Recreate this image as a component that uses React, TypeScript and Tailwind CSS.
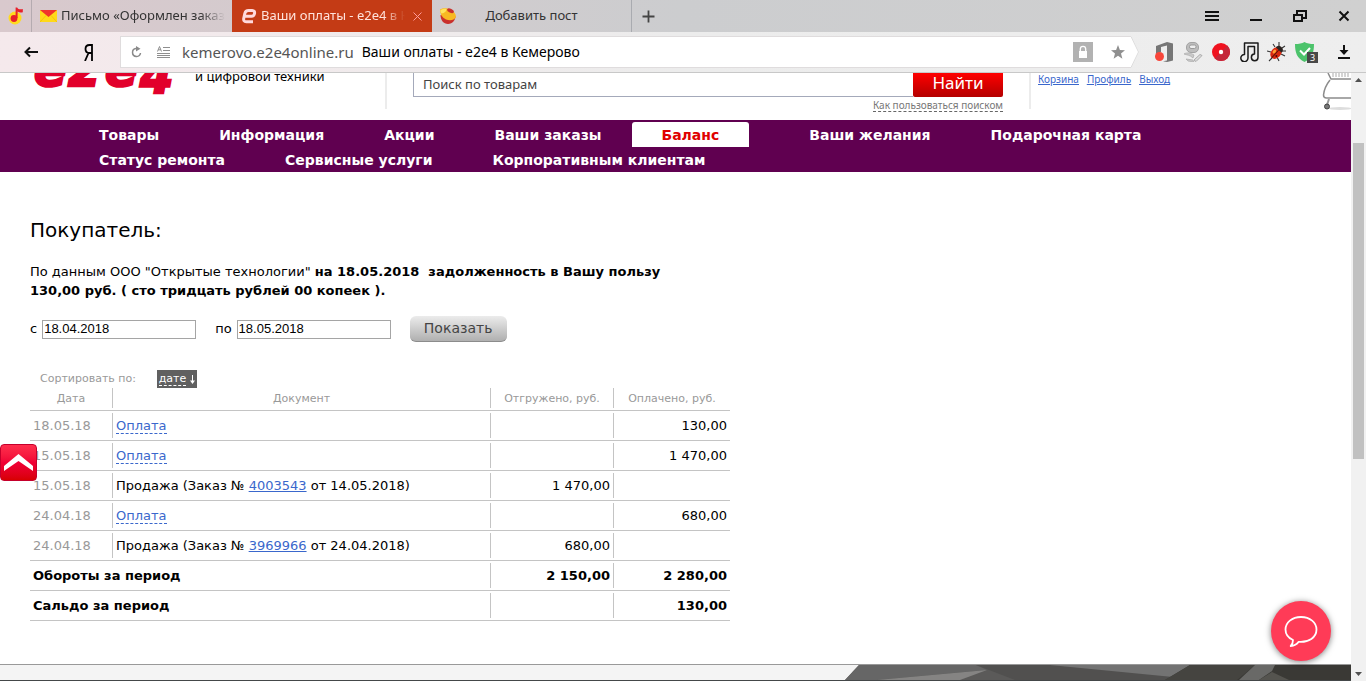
import type { ReactNode } from 'react';

const ui = 'font-["Noto_Sans","Open_Sans",sans-serif]';

const firstMenu = ['Товары', 'Информация', 'Акции', 'Ваши заказы', 'Баланс', 'Ваши желания', 'Подарочная карта'];
const secondMenu = ['Статус ремонта', 'Сервисные услуги', 'Корпоративным клиентам'];

type Row = { date: string; order?: string; from?: string; shipped?: string; paid?: string };

const rows: Row[] = [
  { date: '18.05.18', paid: '130,00' },
  { date: '15.05.18', paid: '1 470,00' },
  { date: '15.05.18', order: '4003543', from: '14.05.2018', shipped: '1 470,00' },
  { date: '24.04.18', paid: '680,00' },
  { date: '24.04.18', order: '3969966', from: '24.04.2018', shipped: '680,00' },
];

function TabStrip() {
  return (
    <div className={`${ui} flex h-8 shrink-0 bg-linear-to-r from-[#d9c9cd] via-[#cccdcf] to-[#d0d0d0] text-[13px] text-[#333]`}>
      <button aria-label="Музыка" className="flex w-8 shrink-0 items-center justify-center border-r border-[#b5abb0]">
        <svg width="16" height="18" viewBox="0 0 16 18">
          <circle cx="7" cy="11" r="6.5" fill="#ffdb1f" />
          <circle cx="6" cy="11.5" r="3.4" fill="#e8202a" />
          <path d="M7.600 11V0.500h1.600c.5 2 3.500 2 5.600 1.600v3.200c-2 .6-4 .3-5.200-.8V11z" fill="#e8202a" />
        </svg>
      </button>
      <button className="flex w-50 shrink-0 items-center gap-1 overflow-hidden pl-2">
        <svg width="17" height="12" viewBox="0 0 17 12" className="shrink-0">
          <rect width="17" height="12" fill="#ffd91a" />
          <path d="M0 0h17L8.500 7z" fill="#f0342c" />
          <path d="M0 12l6-6.500M17 12l-6-6.500" stroke="#eab600" strokeWidth=".6" />
        </svg>
        <span className="whitespace-nowrap mask-r-from-85%">Письмо «Оформлен заказ</span>
      </button>
      <div className="flex w-50 shrink-0 items-center bg-[#c43b15] pl-[9px] text-[#ffe3dc]">
        <svg width="16" height="16" viewBox="0 0 16 16" className="shrink-0">
          <path
            d="M4 8.200h6.500c1.700 0 2.600-.6 3-2.500.4-2-.3-3.200-2.300-3.200H7.500C5.300 2.500 4.300 3.400 3.800 5.500L2.800 10c-.5 2.500.2 3.700 2.500 3.700H12"
            fill="none"
            stroke="#ffd9dc"
            strokeWidth="3"
          />
        </svg>
        <button className="ml-1 w-36 overflow-hidden text-left whitespace-nowrap mask-r-from-85%">Ваши оплаты - e2e4 в Ке</button>
        <button aria-label="Закрыть вкладку" className="ml-2">
          <svg width="9" height="9" viewBox="0 0 9 9">
            <path d="M.5.5l8 8M8.500.5l-8 8" stroke="#ff9a9a" />
          </svg>
        </button>
      </div>
      <button className="flex w-50 shrink-0 items-center border-r border-[#a9abb0] pl-2">
        <svg width="16" height="16" viewBox="0 0 16 16">
          <path d="M.5 7c0 5 3 9 7.500 9s7.500-4 7.500-8z" fill="#c9302c" />
          <path d="M0 1.500C3-.5 7 0 10 1.500c4 1.500 6 4.500 6 7.500-2 3.500-6 4-10 2.500C2 9.500 0 6 0 1.500z" fill="#f8b922" />
          <path d="M.5 2C3 .5 5 .5 6.500 1c0 2.500-2 4-5 4.500C.6 4.500.3 3 .5 2z" fill="#ffe45c" />
          <ellipse cx="10.500" cy="2.800" rx="3.600" ry="2" transform="rotate(25 10.500 2.800)" fill="#c9302c" />
        </svg>
        <span className="grow pr-6 text-center">Добавить пост</span>
      </button>
      <button aria-label="Новая вкладка" className="px-2.5">
        <svg width="13" height="13" viewBox="0 0 13 13">
          <path d="M6.500.5v12M.5 6.500h12" stroke="#444" strokeWidth="1.800" />
        </svg>
      </button>
      <div className="ml-auto flex items-center gap-[30px] pr-[15px] text-[#111]">
        <button aria-label="Меню">
          <svg width="14" height="12" viewBox="0 0 14 12">
            <path d="M0 2h14M0 6h14M0 10h14" stroke="currentColor" strokeWidth="2" />
          </svg>
        </button>
        <button aria-label="Свернуть">
          <svg width="14" height="12" viewBox="0 0 14 12">
            <path d="M1 10h12" stroke="currentColor" strokeWidth="2" />
          </svg>
        </button>
        <button aria-label="Окно">
          <svg width="14" height="12" viewBox="0 0 14 12" fill="none" stroke="currentColor" strokeWidth="2">
            <path d="M1 5h8v6H1zM4 4.500V1h9v7h-3" />
          </svg>
        </button>
        <button aria-label="Закрыть">
          <svg width="14" height="12" viewBox="0 0 14 12">
            <path d="M2.500 1.500l9 9M11.500 1.500l-9 9" stroke="currentColor" strokeWidth="2" />
          </svg>
        </button>
      </div>
    </div>
  );
}

function AddressBar() {
  return (
    <div className={`${ui} flex h-[41px] shrink-0 items-center border-b border-[#c8c8c8] bg-linear-to-r from-[#f5e9ec] via-[#ececec] to-[#eeeeee]`}>
      <button aria-label="Назад" className="ml-6">
        <svg width="15" height="12" viewBox="0 0 15 12" fill="none" stroke="#111" strokeWidth="2">
          <path d="M14 6H1.500M6 1.500L1.500 6 6 10.500" />
        </svg>
      </button>
      <button className="ml-[45px] w-3" aria-label="Яндекс">
        <svg width="9" height="17" viewBox="0 0 9 17" fill="none" stroke="#000" strokeWidth="1.800">
          <path d="M8 17V1H5.500C2.800 1 1.500 2.600 1.500 5s1.300 4 4 4H8M4.500 9L1 17" />
        </svg>
      </button>
      <div className="ml-6 flex h-8 min-w-0 grow">
        <div className="flex min-w-0 grow items-center border border-r-0 border-[#dfdcdd] bg-white pl-2.5">
          <button aria-label="Обновить">
            <svg width="11" height="12" viewBox="0 0 11 12">
              <path d="M7 2.500H5A4 4 0 1 0 9.500 7" fill="none" stroke="#8a8a8a" strokeWidth="1.500" />
              <path d="M5 0l4.500 2.700L5 5.500z" fill="#8a8a8a" />
            </svg>
          </button>
          <svg width="13" height="12" viewBox="0 0 13 12" className="ml-[15px] shrink-0" fill="none" stroke="#8e8e8e">
            <path d="M6 1.500h7M6 4.500h7M0 7.500h13M0 9.500h13M0 11.500h13M.5 5.500L2.500.5l2 5M1.200 3.800h2.600" />
          </svg>
          <span className="ml-3 text-[15px] text-[#555]">kemerovo.e2e4online.ru</span>
          <span className="ml-2 truncate text-sm text-black">Ваши оплаты - e2e4 в Кемерово</span>
          <div className="ml-auto flex items-center gap-4.5 pr-1.5">
            <svg width="20" height="20" viewBox="0 0 20 20">
              <rect width="20" height="20" fill="#b2b2b2" />
              <rect x="6" y="9" width="8" height="7" fill="#fff" />
              <path d="M7.300 9V7a2.700 2.700 0 0 1 5.400 0v2" fill="none" stroke="#fff" strokeWidth="1.300" />
            </svg>
            <svg width="14" height="14" viewBox="0 0 14 14">
              <path d="M7 0l1.900 4.900 5.100.300-4 3.300 1.400 5.200L7 10.800l-4.400 2.900L4 8.500 0 5.200l5.100-.3z" fill="#8f8f8f" />
            </svg>
          </div>
        </div>
        <svg width="8" height="32" viewBox="0 0 8 32" className="shrink-0">
          <path d="M0 0l8 16-8 16z" fill="#fff" />
          <path d="M0 .5L7.500 16 0 31.500" fill="none" stroke="#dcdcdc" />
        </svg>
      </div>
      <div className="ml-4 flex items-center gap-2 pr-4">
        <svg width="20" height="20" viewBox="0 0 20 20">
          <path d="M1 4l11-4 6 1.500v17L12 20l-4-.7 4-.8V3.500L6 5v5L1 12z" fill="#767676" />
          <circle cx="4.500" cy="14.500" r="4.500" fill="#f8463a" />
        </svg>
        <svg width="20" height="20" viewBox="0 0 20 20">
          <rect x="3.500" y=".5" width="12" height="10" rx="4.500" fill="#bdbdbd" stroke="#a3a3a3" />
          <rect x="6.500" y="3" width="6.500" height="3.500" rx="1.500" fill="#eee" stroke="#999" />
          <path d="M1 12c3-2 7-1 10 1l-1 3c-3-3-6-3-9-4zM3 17l7 1 1 2-6-1z" fill="#c9c9c9" stroke="#aaa" strokeWidth=".7" />
          <path d="M11 18l6-5.500 2 1-6 6z" fill="#ddd" stroke="#aaa" />
        </svg>
        <svg width="20" height="20" viewBox="0 0 20 20">
          <circle cx="10" cy="10" r="9" fill="#f0121f" />
          <path d="M16.400 3.600A9 9 0 0 1 3.600 16.400z" fill="#c5263a" />
          <circle cx="10" cy="10" r="2.200" fill="#fff" />
        </svg>
        <svg width="20" height="20" viewBox="0 0 20 20" fill="none" stroke="#1b1b1b" strokeWidth="1.500" strokeLinejoin="round">
          <path d="M5.500 1H19v14.500a3.300 3.300 0 1 1-3.500-3.400V4.500H9V16a3.600 3.600 0 1 1-3.500-3.500z" />
        </svg>
        <svg width="20" height="20" viewBox="0 0 20 20">
          <path d="M8 5L6 2M12 4V0M15 6l3-2M15 9h4M14 12l4 2M10 15l2 4M5 16l-3 3M4 10L0 9" stroke="#333" strokeWidth="1.100" />
          <g transform="rotate(42 9 11)">
            <ellipse cx="9" cy="11" rx="5" ry="6.500" fill="#d9280f" />
            <path d="M5 7a4 4 0 0 1 8 0z" fill="#2c2320" />
            <path d="M9 7v10.500" stroke="#5a1208" />
            <ellipse cx="6.800" cy="11" rx="1.400" ry="2.200" fill="#ffa033" />
            <circle cx="11.300" cy="13" r="1" fill="#4a0f06" />
          </g>
        </svg>
        <span className="relative">
          <svg width="20" height="20" viewBox="0 0 20 20">
            <path d="M0 2c4 0 7-.6 9.500-2C12 1.400 15 2 19 2c0 9-2 14-9.500 18C2 16 0 11 0 2z" fill="#4cc36b" />
            <path d="M5 8.500l4 4 6-6.500" fill="none" stroke="#fff" strokeWidth="2" />
          </svg>
          <span className="absolute top-2.5 left-3 h-[11px] w-[11px] bg-[#484848] text-center text-[9px] leading-[11px] text-white">3</span>
        </span>
        <button aria-label="Загрузки" className="ml-[15px]">
          <svg width="12" height="14" viewBox="0 0 12 14">
            <path d="M6 0v8M0 13h12" stroke="#111" strokeWidth="2" />
            <path d="M1.500 5h9L6 10z" fill="#111" />
          </svg>
        </button>
      </div>
    </div>
  );
}

function ShopHeader() {
  return (
    <header className="flex h-[47px] shrink-0 items-start overflow-hidden">
      <svg width="145" height="24" viewBox="0 0 145 24" className="ml-[34px] shrink-0" role="img" aria-label="e2e4">
        <g
          fill="#e2002b"
          stroke="#e2002b"
          strokeWidth="2.500"
          fontFamily="DejaVu Sans"
          fontWeight="bold"
          fontStyle="italic"
          fontSize="48"
        >
          <text x="0" y="13">e</text>
          <text x="34" y="13">2</text>
          <text x="71" y="13">e</text>
          <text x="106" y="20">4</text>
        </g>
      </svg>
      <p className={`${ui} ml-4 w-[190px] shrink-0 text-[13px] leading-1.5 text-black`}>и цифровой техники</p>
      <div className="h-9 w-0.5 shrink-0 bg-[#ececec]" />
      <form className="ml-[26px] w-[590px] shrink-0">
        <div className="flex h-6">
          <input
            aria-label="Поиск по товарам"
            placeholder="Поиск по товарам"
            className={`${ui} min-w-0 grow border border-t-0 border-r-0 border-[#a4a9ba] pl-[9px] text-[13px] placeholder:text-[#444]`}
          />
          <button className={`${ui} w-[90px] rounded-b-xs bg-linear-to-b from-[#ff0000] to-[#b40000] pb-1 text-[17px] leading-5 text-white`}>Найти</button>
        </div>
        <a href="#search-help" className={`${ui} float-right mt-0.5 border-b border-dashed border-[#666] text-[10px] leading-3 text-[#777]`}>
          Как пользоваться поиском
        </a>
      </form>
      <div className="ml-[26px] h-9 w-0.5 shrink-0 bg-[#ececec]" />
      <nav className={`${ui} ml-[7px] flex gap-2 text-[10px] leading-3 text-[#3a67cc] underline`}>
        <a href="#cart">Корзина</a>
        <a href="#profile">Профиль</a>
        <a href="#exit">Выход</a>
      </nav>
      <svg width="29" height="38" viewBox="0 0 29 38" className="ml-auto shrink-0" fill="none">
        <path d="M6 0l3 6h20" stroke="#8a8a8a" strokeWidth="1.500" />
        <path d="M11 0v4M14 0v4M17 0v4M20 0v4M23 0v4M26 0v4" stroke="#aaa" />
        <path d="M8 7C4 12 2 17 1.500 22c0 2 1 3 3 3H29" stroke="#8c8c8c" strokeWidth="1.500" />
        <path d="M7 26l-2 6" stroke="#999" strokeWidth="2" />
        <ellipse cx="18" cy="35.500" rx="12" ry="1.500" fill="#ddd" />
        <circle cx="5" cy="33.500" r="2.500" fill="#777" stroke="#444" />
      </svg>
    </header>
  );
}

function Menu() {
  return (
    <nav className="shrink-0 bg-[#600050] pt-0.5 pl-[69px] text-sm leading-[27px] font-bold whitespace-nowrap text-white">
      <div className="flex h-[25px]">
        {firstMenu.map((item) => (
          <a
            key={item}
            href="#menu"
            className={item === 'Баланс' ? 'mr-[30px] rounded-t-[3px] bg-white px-[30px] text-[#e00000]' : 'px-[30px]'}
          >
            {item}
          </a>
        ))}
      </div>
      <div className="flex h-[25px]">
        {secondMenu.map((item) => (
          <a key={item} href="#menu" className="px-[30px]">
            {item}
          </a>
        ))}
      </div>
    </nav>
  );
}

function Cell({ children, align = 'text-right', line = true }: { children?: ReactNode; align?: string; line?: boolean }) {
  return (
    <div className={`h-[25px] px-[3px] leading-[25px] ${align} ${line ? 'border-l border-[#c4c4c4]' : ''}`}>{children}</div>
  );
}

const td = 'border-b border-[#c4c4c4] py-0.5';

function Ledger() {
  return (
    <table className="w-[700px] table-fixed border-separate border-spacing-0">
      <colgroup>
        <col className="w-[82px]" />
        <col className="w-[378px]" />
        <col className="w-[123px]" />
        <col className="w-[117px]" />
      </colgroup>
      <thead className="text-[11px] text-[#999]">
        <tr>
          {['Дата', 'Документ', 'Отгружено, руб.', 'Оплачено, руб.'].map((h, i) => (
            <th key={h} className="border-b border-[#c4c4c4] pb-0.5 font-normal">
              <div className={`h-5 leading-[22px] ${i ? 'border-l border-[#c4c4c4]' : ''}`}>{h}</div>
            </th>
          ))}
        </tr>
      </thead>
      <tbody>
        {rows.map((r, i) => (
          <tr key={i}>
            <td className={`${td} text-[#999]`}>
              <Cell align="text-left" line={false}>{r.date}</Cell>
            </td>
            <td className={td}>
              <Cell align="text-left">
                {r.order ? (
                  <>
                    Продажа (Заказ № <a href="#order" className="text-[#3a67cc] underline">{r.order}</a> от {r.from})
                  </>
                ) : (
                  <a href="#payment" className="border-b border-dashed border-[#3a67cc] text-[#3a67cc]">Оплата</a>
                )}
              </Cell>
            </td>
            <td className={td}><Cell>{r.shipped}</Cell></td>
            <td className={td}><Cell>{r.paid}</Cell></td>
          </tr>
        ))}
        <tr className="font-bold">
          <td colSpan={2} className={td}><Cell align="text-left" line={false}>Обороты за период</Cell></td>
          <td className={td}><Cell>2 150,00</Cell></td>
          <td className={td}><Cell>2 280,00</Cell></td>
        </tr>
        <tr className="font-bold">
          <td colSpan={2} className={td}><Cell align="text-left" line={false}>Сальдо за период</Cell></td>
          <td className={td}><Cell /></td>
          <td className={td}><Cell>130,00</Cell></td>
        </tr>
      </tbody>
    </table>
  );
}

function Content() {
  const field = 'ml-[5px] h-[19px] w-[154px] border border-[#a5a5a5] px-px font-["Liberation_Sans",Arial,sans-serif] text-[13px]';
  return (
    <main className="px-[30px] text-[13px] text-black">
      <h1 className="mt-[45px] text-xl leading-[26px]">Покупатель:</h1>
      <p className="mt-[19px] w-[660px] leading-[19px]">
        По данным ООО "Открытые технологии" <b>на 18.05.2018 &nbsp;задолженность в Вашу пользу<br />130,00 руб. ( сто тридцать рублей 00 копеек ).</b>
      </p>
      <form className="mt-4 flex h-[26px] items-center">
        <label htmlFor="from">с</label>
        <input id="from" defaultValue="18.04.2018" className={field} />
        <label htmlFor="to" className="ml-[19px]">по</label>
        <input id="to" defaultValue="18.05.2018" className={field} />
        <button className="ml-[19px] h-[26px] w-[97px] rounded-md border-b border-[#8c8c8c] bg-linear-to-b from-[#ececec] to-[#b0b0b0] pb-0.5 text-sm leading-5.5 text-[#444]">Показать</button>
      </form>
      <div className="mt-7 flex h-[18px] items-center pl-2.5 text-[11px] text-[#999]">
        <span className="w-[117px]">Сортировать по:</span>
        <button className="flex h-[18px] w-10 items-center justify-center gap-1 bg-[#606060] text-white">
          <span className="border-b border-dashed border-white leading-3">дате</span>
          <svg width="5" height="9" viewBox="0 0 5 9">
            <path d="M2.500 0v8" stroke="#fff" />
            <path d="M0 5.500h5L2.500 9z" fill="#fff" />
          </svg>
        </button>
      </div>
      <Ledger />
    </main>
  );
}

function Footer() {
  return (
    <footer className="mt-auto h-[17px] shrink-0 border-t border-b border-t-[#999] border-b-[#444849] bg-[#f4f4f4]">
      <svg width="506" height="15" viewBox="0 0 506 15" className="ml-auto block">
        <path d="M14 0h492v15H0z" fill="#5b5a59" />
        <path d="M14 0h117l11 5L32 15H0z" fill="#666" />
        <path d="M142 5L32 15h83z" fill="#858483" />
        <path d="M131 0h74l145 12-8 3H170z" fill="#51504f" />
        <path d="M205 0h140l-17 12z" fill="#737373" />
        <path d="M345 0h161v15H320z" fill="#3a3935" />
        <path d="M345 0h65l-18 15h-72z" fill="#454440" />
        <path d="M410 0h20l-3 6-13 9h-20z" fill="#696967" />
        <path d="M427 7l17 8h-30z" fill="#55544f" />
      </svg>
    </footer>
  );
}

function ScrollBar() {
  return (
    <div className="flex w-[15px] shrink-0 flex-col items-center bg-[#f1f1f1]" aria-hidden="true">
      <svg width="15" height="15" viewBox="0 0 15 15">
        <path d="M4 9l3.500-4L11 9z" fill="#505050" />
      </svg>
      <div className="h-[9%] shrink-0" />
      <div className="h-[52%] w-[11px] bg-[#c1c1c1]" />
      <svg width="15" height="15" viewBox="0 0 15 15" className="mt-auto">
        <path d="M4 6l3.500 4L11 6z" fill="#505050" />
      </svg>
    </div>
  );
}

export default function App() {
  return (
    <div className='flex h-screen flex-col overflow-hidden bg-white font-["DejaVu_Sans",Verdana,sans-serif]'>
      <TabStrip />
      <AddressBar />
      <div className="relative flex min-h-0 grow">
        <div className="flex min-w-0 grow flex-col overflow-hidden">
          <ShopHeader />
          <Menu />
          <Content />
          <Footer />
        </div>
        <ScrollBar />
        <button
          aria-label="Наверх"
          className="absolute top-[371px] left-0 flex h-[37px] w-[37px] items-center justify-center rounded-sm border border-[#c5002c] bg-linear-to-b from-[#ff2d4d] via-[#f00035] to-[#d80000]"
        >
          <svg width="29" height="17" viewBox="0 0 29 17">
            <path d="M0 12L14.500 0 29 12v5L14.500 7 0 17z" fill="#fff" />
          </svg>
        </button>
        <button
          aria-label="Чат"
          className="absolute right-[35px] bottom-5 flex h-15 w-15 items-center justify-center rounded-full bg-[#ff3b57] shadow-[0_1px_6px_rgba(0,0,0,0.5)]"
        >
          <svg width="34" height="34" viewBox="0 0 34 34" fill="none" stroke="#fff" strokeWidth="1.800">
            <path d="M17 3C8 3 1.500 8.500 1.500 15.500c0 5 3 8.500 7.500 10.500 0 2.500-.8 4.500-2.300 6 3.800-.2 6.300-1.800 8-4.200 10 .8 17.800-4.300 17.800-12.300C32.500 8.500 26 3 17 3z" strokeLinejoin="round" />
          </svg>
        </button>
      </div>
    </div>
  );
}
